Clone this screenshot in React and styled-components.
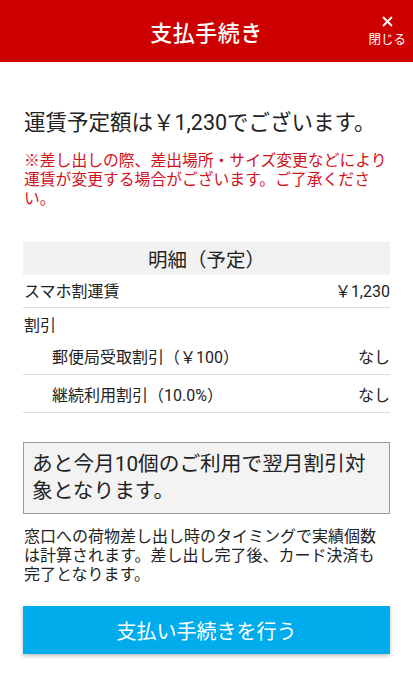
import React from "react";
import styled, { createGlobalStyle } from "styled-components";

const GlobalStyle = createGlobalStyle`
  html, body {
    margin: 0;
    padding: 0;
    background: #fff;
  }
  body {
    font-family: Roboto, "Noto Sans CJK JP", sans-serif;
    color: #222;
  }
`;

const rows = [
  { label: "スマホ割運賃", value: "￥1,230", kind: "main" },
  { label: "割引", value: "", kind: "group" },
  { label: "郵便局受取割引（￥100）", value: "なし", kind: "sub" },
  { label: "継続利用割引（10.0%）", value: "なし", kind: "sub" },
];

const App = () => (
  <Page>
    <GlobalStyle />
    <TopBar>
      <Title>支払手続き</Title>
      <CloseButton type="button">
        <svg width="11" height="11" viewBox="0 0 11 11">
          <path d="M1 1 L10 10 M10 1 L1 10" stroke="#fff" strokeWidth="1.8" />
        </svg>
        <span>閉じる</span>
      </CloseButton>
    </TopBar>

    <Content>
      <Amount>運賃予定額は￥1,230でございます。</Amount>
      <Notice>
        ※差し出しの際、差出場所・サイズ変更などにより運賃が変更する場合がございます。ご了承ください。
      </Notice>

      <Details>
        <DetailsHeading>明細（予定）</DetailsHeading>
        {rows.map((row) => (
          <Row key={row.label} kind={row.kind}>
            <span>{row.label}</span>
            <span>{row.value}</span>
          </Row>
        ))}
      </Details>

      <InfoBox>あと今月10個のご利用で翌月割引対象となります。</InfoBox>
      <Note>
        窓口への荷物差し出し時のタイミングで実績個数は計算されます。差し出し完了後、カード決済も完了となります。
      </Note>

      <PayButton type="button">支払い手続きを行う</PayButton>
    </Content>
  </Page>
);

export default App;

const Page = styled.div`
  width: 413px;
  min-height: 700px;
`;

const TopBar = styled.header`
  position: relative;
  height: 62px;
  background: #cc0000;
  display: flex;
  align-items: center;
  justify-content: center;
`;

const Title = styled.h1`
  margin: 0;
  color: #fff;
  font-size: 22px;
  font-weight: 500;
  letter-spacing: 0.5px;
`;

const CloseButton = styled.button`
  position: absolute;
  right: 7px;
  top: 16px;
  border: none;
  background: none;
  padding: 0;
  display: flex;
  flex-direction: column;
  align-items: center;
  gap: 6px;
  color: #fff;
  font-family: inherit;
  font-size: 12.5px;
  line-height: 14px;
  cursor: pointer;
`;

const Content = styled.main`
  padding: 47px 23px 40px;
`;

const Amount = styled.p`
  margin: 0 0 0 1px;
  font-size: 21.5px;
  line-height: 28px;
  color: #222;
`;

const Notice = styled.p`
  margin: 14px 0 0 1px;
  font-size: 15.8px;
  line-height: 19px;
  color: #d2101c;
`;

const Details = styled.section`
  margin-top: 34px;
`;

const DetailsHeading = styled.h2`
  margin: 0;
  height: 33px;
  background: #f2f2f2;
  display: flex;
  align-items: center;
  justify-content: center;
  font-size: 19.5px;
  font-weight: 400;
  color: #222;
`;

const Row = styled.div`
  display: flex;
  justify-content: space-between;
  font-size: 16px;
  line-height: 22px;
  color: #222;
  padding: ${({ kind }) =>
    kind === "main" ? "6px 0 4px 1px" : kind === "group" ? "7px 0 0 1px" : "10px 0 5px 29px"};
  border-bottom: ${({ kind }) => (kind === "group" ? "none" : "1px solid #dcdcdc")};
`;

const InfoBox = styled.div`
  margin-top: 29px;
  border: 1px solid #9a9a9a;
  background: #f3f3f3;
  padding: 8px 8px 8px 8px;
  font-size: 20.7px;
  line-height: 27px;
  color: #222;
`;

const Note = styled.p`
  margin: 13px 0 0 1px;
  font-size: 16px;
  line-height: 19px;
  color: #222;
`;

const PayButton = styled.button`
  display: block;
  width: 100%;
  height: 48px;
  margin-top: 22px;
  border: none;
  background: #00acec;
  color: #fff;
  font-family: inherit;
  font-size: 20px;
  box-shadow: 0 2px 4px rgba(0, 0, 0, 0.25);
  cursor: pointer;
`;
